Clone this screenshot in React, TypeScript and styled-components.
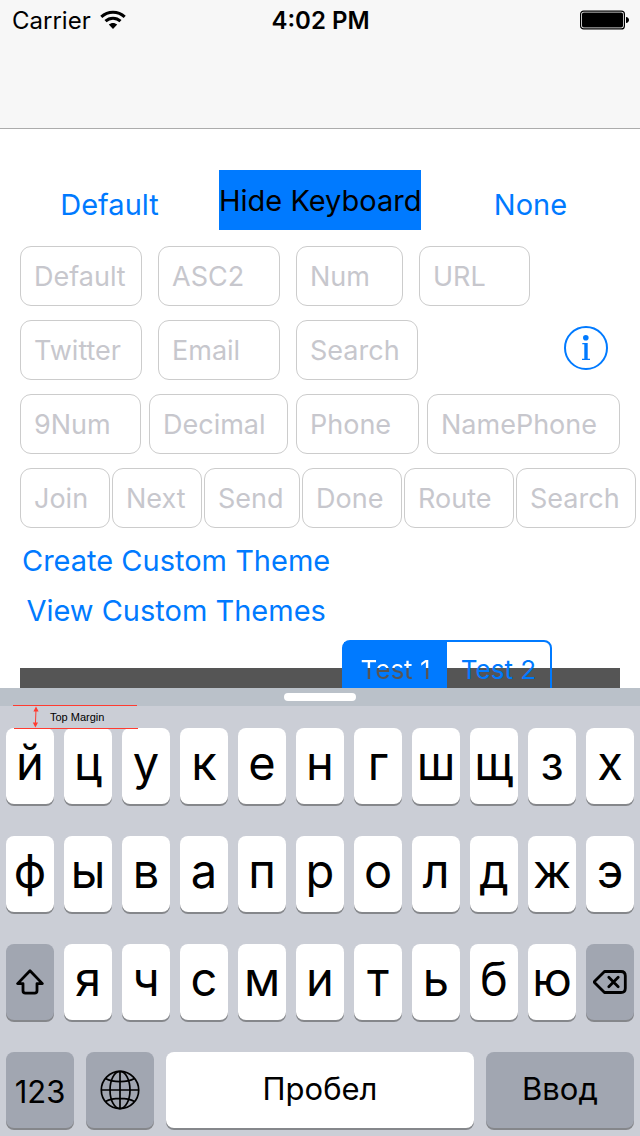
import React from "react";
import styled, { createGlobalStyle } from "styled-components";

const BLUE = "#007aff";
const PANEL = "#555555";

const GlobalStyle = createGlobalStyle`
  *, *::before, *::after { box-sizing: border-box; }
  body { margin: 0; background: #fff; }
  button, input { font: inherit; color: inherit; }
  button { border: 0; padding: 0; margin: 0; background: none; cursor: pointer; white-space: nowrap; }
`;

const Screen = styled.div`
  display: flex;
  flex-direction: column;
  height: 100vh;
  overflow: hidden;
  background: #fff;
  color: #000;
  font-family: Inter, "Liberation Sans", sans-serif;
  font-size: 29px;
`;

const NavBar = styled.header`
  flex: none;
  height: 129px;
  background: #f7f7f7;
  border-bottom: 1px solid #acacac;
`;

const StatusBar = styled.div`
  display: grid;
  grid-template-columns: 1fr auto 1fr;
  align-items: center;
  height: 40px;
  padding: 0 11px 0 12px;
  font-size: 24px;
`;

const Carrier = styled.div`
  display: flex;
  align-items: center;
  gap: 9px;
`;

const Clock = styled.time`
  font-weight: 600;
`;

const Battery = styled.svg`
  justify-self: end;
`;

const Content = styled.main`
  flex: 1;
  min-height: 0;
  overflow: hidden;
  padding-top: 41px;
`;

const Actions = styled.div`
  display: grid;
  grid-template-columns: 1fr auto 1fr;
  justify-items: center;
  align-items: start;
  height: 76px;
`;

const TextButton = styled.button`
  color: ${BLUE};
  line-height: 70px;
`;

const HideButton = styled.button`
  width: 202px;
  height: 60px;
  background: ${BLUE};
  color: #000;
`;

const Form = styled.form`
  display: flex;
  flex-direction: column;
  gap: 14px;
`;

const FieldRow = styled.div<{ $columns: string; $gap: number; $end?: number }>`
  display: grid;
  grid-template-columns: ${(p) => p.$columns};
  column-gap: ${(p) => p.$gap}px;
  padding: 0 ${(p) => p.$end ?? 20}px 0 20px;
`;

const Field = styled.input`
  width: 100%;
  min-width: 0;
  height: 60px;
  padding: 0 0 0 13px;
  border: 1px solid #cccccc;
  border-radius: 11px;
  background: #fff;
  font-size: 27px;
  outline: none;
  &::placeholder { color: #c7c7cd; opacity: 1; }
`;

const InfoButton = styled.button`
  justify-self: end;
  align-self: start;
  width: 44px;
  height: 44px;
  margin: 6px 12px 0 0;
  svg { display: block; }
`;

const ThemeLinks = styled.nav`
  display: flex;
  flex-direction: column;
  align-items: center;
  width: fit-content;
  margin: 8px 0 4px 22px;
`;

const ThemeLink = styled.a`
  color: ${BLUE};
  line-height: 50px;
  text-decoration: none;
  white-space: nowrap;
`;

const Preview = styled.section`
  display: grid;
  padding: 0 20px;
  > * { grid-area: 1 / 1; }
`;

const PreviewPanel = styled.div`
  height: 200px;
  margin-top: 28px;
  background: ${PANEL};
`;

const Segments = styled.div`
  justify-self: end;
  display: grid;
  grid-template-columns: 1fr 1fr;
  width: 210px;
  height: 58px;
  margin-right: 68px;
  border: 2px solid ${BLUE};
  border-radius: 8px;
  font-size: 26px;
`;

const Segment = styled.button<{ $selected?: boolean }>`
  background: ${(p) => (p.$selected ? BLUE : "transparent")};
  color: ${BLUE};
`;

const CutoutLabel = styled.span`
  display: block;
  line-height: 55px;
  background: linear-gradient(#fff 26px, ${PANEL} 26px);
  background-clip: text;
  color: transparent;
`;

const Keyboard = styled.section`
  position: relative;
  flex: none;
  background: #cbced6;
`;

const HandleBar = styled.div`
  display: flex;
  justify-content: center;
  align-items: center;
  height: 18px;
  background: #bac1c9;
`;

const Handle = styled.div`
  width: 72px;
  height: 8px;
  border-radius: 4px;
  background: #fff;
`;

const MarginGuide = styled.div`
  position: absolute;
  top: 17px;
  left: 13px;
  width: 125px;
  height: 24px;
  pointer-events: none;
  svg { position: absolute; inset: 0; }
`;

const GuideLabel = styled.span`
  display: block;
  padding-left: 37px;
  font: 11px/24px "Liberation Sans", Arial, sans-serif;
`;

const Keys = styled.div`
  display: flex;
  flex-direction: column;
  gap: 32px;
  padding: 22px 6px 8px;
`;

const LetterRow = styled.div`
  display: grid;
  grid-template-columns: repeat(11, minmax(0, 1fr));
  gap: 10px;
  font-size: 47px;
`;

const ControlRow = styled.div`
  display: grid;
  grid-template-columns: 68fr 68fr 308fr 148fr;
  gap: 12px;
  font-size: 31px;
`;

const Key = styled.button<{ $dark?: boolean }>`
  display: flex;
  align-items: center;
  justify-content: center;
  min-width: 0;
  height: 76px;
  border-radius: 8px;
  box-shadow: 0 2px 0 #85878b;
  background: ${(p) => (p.$dark ? "#a1a6b1" : "#fff")};
  line-height: 1;
`;

const LetterKey = styled(Key)`
  padding-bottom: 8px;
`;

const WordKey = styled(Key)`
  padding-bottom: 4px;
`;

const NumberKey = styled(Key)`
  padding-top: 2px;
`;

const WifiIcon = () => (
  <svg width="26" height="20" viewBox="0 0 26 20" aria-hidden="true">
    <g fill="none" stroke="#000" strokeWidth="3">
      <path d="M1.3 6.8C8 .6 18 .6 24.7 6.8" />
      <path d="M5.5 11.2c4.3-4 10.700-4 15 0" />
    </g>
    <path d="M8.800 14.600c2.400-2.200 6-2.200 8.400 0L13 19z" />
  </svg>
);

const BatteryIcon = () => (
  <Battery width="49" height="20" viewBox="0 0 49 20" role="img" aria-label="Battery full">
    <rect x=".6" y="1.100" width="43.800" height="17.800" rx="3" fill="none" stroke="#000" strokeWidth="1.200" />
    <rect x="2" y="2.500" width="41" height="15" rx="1.800" />
    <path d="M46 7c1.800.3 3 1.400 3 3s-1.200 2.700-3 3z" />
  </Battery>
);

const InfoIcon = () => (
  <svg width="44" height="44" viewBox="0 0 44 44" fill={BLUE} aria-hidden="true">
    <circle cx="22" cy="22" r="21" fill="none" stroke={BLUE} strokeWidth="2" />
    <circle cx="21.800" cy="11.700" r="2.800" />
    <path d="M18.300 17h5.400v15.800h2.300V34h-8v-1.200h2.300V18.200h-2z" />
  </svg>
);

const ShiftIcon = () => (
  <svg width="28" height="26" viewBox="0 0 28 26" fill="none" stroke="#000" strokeWidth="2.800" strokeLinejoin="round" aria-hidden="true">
    <path d="M14 1.800 1.600 14.600H7v7.200q0 2.400 2.400 2.400h9.200q2.400 0 2.400-2.400v-7.200h5.400z" />
  </svg>
);

const DeleteIcon = () => (
  <svg width="34" height="24" viewBox="0 0 34 24" fill="none" stroke="#000" strokeWidth="2.800" strokeLinejoin="round" strokeLinecap="round" aria-hidden="true">
    <path d="M11.500 1.500H28q4.300 0 4.300 4.300v12.400q0 4.300-4.300 4.300H11.500L1.700 12.800q-.8-.8 0-1.600z" />
    <path d="m15.800 7.300 9.400 9.400m0-9.400-9.400 9.400" />
  </svg>
);

const GlobeIcon = () => (
  <svg width="40" height="40" viewBox="0 0 40 40" fill="none" stroke="#000" strokeWidth="1.700" aria-hidden="true">
    <circle cx="20" cy="20" r="18.700" />
    <ellipse cx="20" cy="20" rx="10" ry="18.700" />
    <path d="M20 1v38M1 20h38M5.500 8.500C13 12.600 27 12.600 34.500 8.500M5.500 31.500C13 27.400 27 27.400 34.500 31.500" />
  </svg>
);

const fieldRows = [
  { columns: "122fr 122fr 107fr 111fr 74fr", gap: 16, names: ["Default", "ASC2", "Num", "URL"] },
  { columns: "122fr 122fr 122fr 186fr", gap: 16, names: ["Twitter", "Email", "Search"], info: true },
  { columns: "121fr 139fr 123fr 193fr", gap: 8, names: ["9Num", "Decimal", "Phone", "NamePhone"] },
  { columns: "90fr 90fr 96fr 100fr 110fr 120fr", gap: 2, end: 4, names: ["Join", "Next", "Send", "Done", "Route", "Search"] },
];

const Letters = ({ text }: { text: string }) => (
  <>
    {[...text].map((letter) => (
      <LetterKey key={letter} type="button">{letter}</LetterKey>
    ))}
  </>
);

export default function App() {
  return (
    <Screen>
      <GlobalStyle />
      <NavBar>
        <StatusBar>
          <Carrier>Carrier <WifiIcon /></Carrier>
          <Clock>4:02 PM</Clock>
          <BatteryIcon />
        </StatusBar>
      </NavBar>

      <Content>
        <Actions>
          <TextButton type="button">Default</TextButton>
          <HideButton type="button">Hide Keyboard</HideButton>
          <TextButton type="button">None</TextButton>
        </Actions>

        <Form>
          {fieldRows.map((row) => (
            <FieldRow key={row.names[0]} $columns={row.columns} $gap={row.gap} $end={row.end}>
              {row.names.map((name) => (
                <Field key={name} type="text" placeholder={name} aria-label={name} />
              ))}
              {row.info && (
                <InfoButton type="button" aria-label="Info"><InfoIcon /></InfoButton>
              )}
            </FieldRow>
          ))}
        </Form>

        <ThemeLinks>
          <ThemeLink href="#create">Create Custom Theme</ThemeLink>
          <ThemeLink href="#view">View Custom Themes</ThemeLink>
        </ThemeLinks>

        <Preview>
          <PreviewPanel />
          <Segments>
            <Segment type="button" $selected><CutoutLabel>Test 1</CutoutLabel></Segment>
            <Segment type="button">Test 2</Segment>
          </Segments>
        </Preview>
      </Content>

      <Keyboard aria-label="Keyboard">
        <HandleBar><Handle /></HandleBar>
        <Keys>
          <LetterRow><Letters text="йцукенгшщзх" /></LetterRow>
          <LetterRow><Letters text="фывапролджэ" /></LetterRow>
          <LetterRow>
            <Key type="button" $dark aria-label="Shift"><ShiftIcon /></Key>
            <Letters text="ячсмитьбю" />
            <Key type="button" $dark aria-label="Delete"><DeleteIcon /></Key>
          </LetterRow>
          <ControlRow>
            <NumberKey type="button" $dark>123</NumberKey>
            <Key type="button" $dark aria-label="Next keyboard"><GlobeIcon /></Key>
            <WordKey type="button">Пробел</WordKey>
            <WordKey type="button" $dark>Ввод</WordKey>
          </ControlRow>
        </Keys>
        <MarginGuide>
          <svg width="125" height="24" viewBox="0 0 125 24" fill="#ff3b30" stroke="#ff3b30" aria-hidden="true">
            <path d="M0 .5h124M1 23.500h124M23 4l-.6 16" />
            <path d="m23 1.500 2.600 5h-5.200zM22.400 22.500l-2.600-5h5.200z" stroke="none" />
          </svg>
          <GuideLabel>Top Margin</GuideLabel>
        </MarginGuide>
      </Keyboard>
    </Screen>
  );
}
